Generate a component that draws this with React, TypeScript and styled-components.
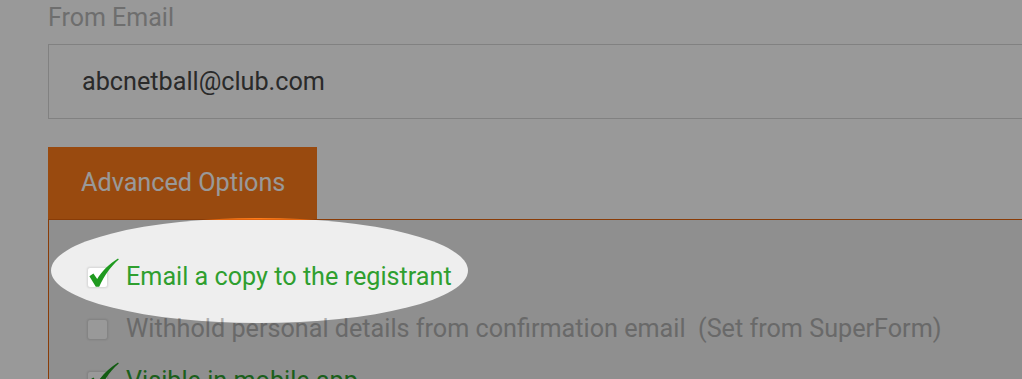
import React from "react";
import styled, { createGlobalStyle } from "styled-components";

const GlobalStyle = createGlobalStyle`
  html, body {
    margin: 0;
    padding: 0;
    background: #ffffff;
    font-family: Roboto, "Liberation Sans", Arial, sans-serif;
    overflow: hidden;
  }
`;

const Page = styled.div`
  position: relative;
  width: 1022px;
  height: 379px;
  overflow: hidden;
  padding-left: 48px;
  box-sizing: border-box;
`;

const FieldLabel = styled.div`
  margin-top: 4px;
  font-size: 25px;
  line-height: 28px;
  color: #b8b8b8;
`;

const EmailInput = styled.div`
  margin-top: 12px;
  height: 75px;
  width: 1100px;
  box-sizing: border-box;
  border: 1px solid #d8d8d8;
  background: #ffffff;
  display: flex;
  align-items: center;
  padding-left: 33px;
  font-size: 25.2px;
  line-height: 28px;
  color: #474747;
`;

const TabBar = styled.div`
  margin-top: 28px;
  display: flex;
`;

const Tab = styled.div`
  width: 269px;
  height: 72px;
  box-sizing: border-box;
  background: #ff7c1a;
  color: #ffffff;
  display: flex;
  align-items: center;
  padding-left: 33px;
  font-size: 25.2px;
  line-height: 28px;
`;

const Panel = styled.div`
  width: 1100px;
  height: 200px;
  box-sizing: border-box;
  background: #eeeeee;
  border: 1px solid #e5650c;
  padding: 31px 0 0 38px;
  display: flex;
  flex-direction: column;
`;

const OptionRow = styled.div<{ $checked: boolean }>`
  height: 52px;
  display: flex;
  align-items: center;
  gap: 18px;
  font-size: 25.2px;
  line-height: 28px;
  color: ${({ $checked }) => ($checked ? "#2f9f2f" : "#b0b0b0")};
  white-space: pre;
`;

const Box = styled.span`
  position: relative;
  width: 21px;
  height: 21px;
  box-sizing: border-box;
  flex-shrink: 0;
  border: 1px solid #dcdcdc;
  border-radius: 3px;
  background: #ffffff;
  box-shadow: 0 0 2px rgba(0, 0, 0, 0.12);
`;

const Tick = styled.svg`
  position: absolute;
  left: 1px;
  top: -10px;
  width: 30px;
  height: 30px;
  overflow: visible;
`;

// dim layer with an elliptical hole around the first option
const Spotlight = styled.div`
  position: absolute;
  left: 51px;
  top: 218px;
  width: 417px;
  height: 105px;
  border-radius: 50%;
  box-shadow: 0 0 0 2000px rgba(0, 0, 0, 0.4);
  pointer-events: none;
`;

const CheckBox = ({ checked }: { checked: boolean }) => (
  <Box>
    {checked && (
      <Tick viewBox="0 0 30 30">
        <path
          d="M0.4 18.2 L4.4 15.4 L8.2 21 C12.5 13.5 20 6 29 0.4 L29.8 1.4 C22 8 15.5 17 10.2 28.8 L6.8 28.8 Z"
          fill="#1f9a1f"
        />
      </Tick>
    )}
  </Box>
);

const options = [
  { label: "Email a copy to the registrant", checked: true },
  {
    label: "Withhold personal details from confirmation email  (Set from SuperForm)",
    checked: false,
  },
  { label: "Visible in mobile app", checked: true },
];

const App = () => {
  return (
    <Page>
      <GlobalStyle />
      <FieldLabel>From Email</FieldLabel>
      <EmailInput>abcnetball@club.com</EmailInput>
      <TabBar>
        <Tab>Advanced Options</Tab>
      </TabBar>
      <Panel>
        {options.map((o) => (
          <OptionRow key={o.label} $checked={o.checked}>
            <CheckBox checked={o.checked} />
            <span>{o.label}</span>
          </OptionRow>
        ))}
      </Panel>
      <Spotlight />
    </Page>
  );
};

export default App;
